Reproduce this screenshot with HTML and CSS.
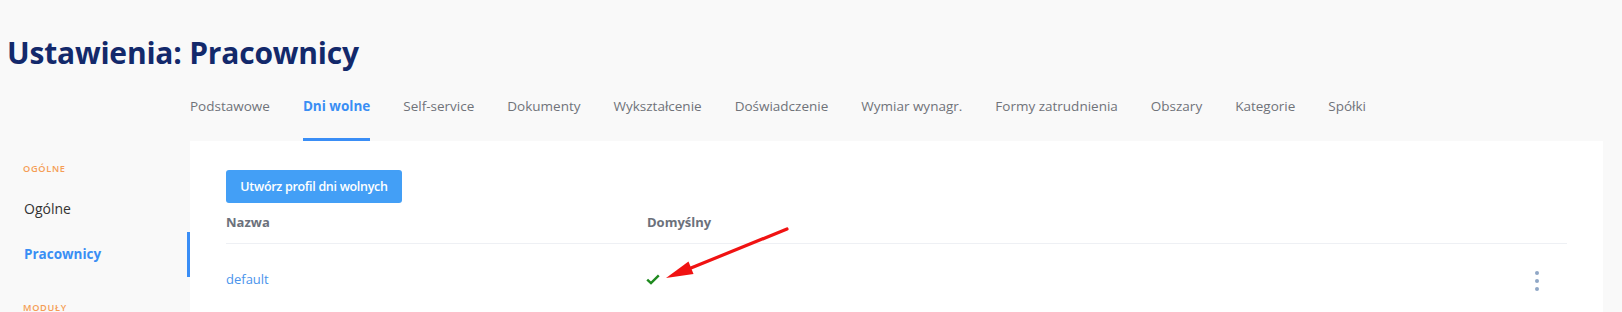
FILE: index.html
```html
<!DOCTYPE html>
<html lang="pl">
<head>
<meta charset="utf-8">
<title>Ustawienia: Pracownicy</title>
<link rel="stylesheet" href="styles.css">
</head>
<body>
<h1 class="page-title">Ustawienia: Pracownicy</h1>
<div class="layout">
  <nav class="tabs">
    <a class="tab">Podstawowe</a>
    <a class="tab tab-active">Dni wolne</a>
    <a class="tab">Self-service</a>
    <a class="tab">Dokumenty</a>
    <a class="tab">Wykształcenie</a>
    <a class="tab">Doświadczenie</a>
    <a class="tab">Wymiar wynagr.</a>
    <a class="tab">Formy zatrudnienia</a>
    <a class="tab">Obszary</a>
    <a class="tab">Kategorie</a>
    <a class="tab">Spółki</a>
  </nav>
  <aside class="sidebar">
    <div class="side-label">OGÓLNE</div>
    <a class="side-item">Ogólne</a>
    <a class="side-item side-active">Pracownicy</a>
    <div class="side-label side-label-next">MODUŁY</div>
  </aside>
  <main class="panel">
    <button class="btn-primary">Utwórz profil dni wolnych</button>
    <div class="table">
      <div class="row row-head">
        <div class="cell cell-name">Nazwa</div>
        <div class="cell cell-default">Domyślny</div>
        <div class="cell cell-actions"></div>
      </div>
      <div class="row">
        <div class="cell cell-name"><a class="link">default</a></div>
        <div class="cell cell-default">
          <svg class="check" width="14" height="11" viewBox="0 0 14 11"><path d="M1.2 5.6 L5 9.2 L12.8 1.4" fill="none" stroke="#1f8a1f" stroke-width="2.4"/></svg>
        </div>
        <div class="cell cell-actions">
          <span class="kebab"><i></i><i></i><i></i></span>
        </div>
      </div>
    </div>
  </main>
</div>
<svg class="annotation" width="1622" height="312" viewBox="0 0 1622 312">
  <line x1="787" y1="229" x2="686" y2="270" stroke="#f01212" stroke-width="3.2" stroke-linecap="round"/>
  <polygon points="666,278 688.5,261.5 693.5,274" fill="#f01212"/>
</svg>
</body>
</html>
```

FILE: styles.css
```css
* { box-sizing: border-box; }

html, body {
  margin: 0;
  padding: 0;
}

body {
  background: #f9f9f9;
  font-family: "Open Sans", "Noto Sans", sans-serif;
  color: #333;
  width: 1622px;
  height: 312px;
  overflow: hidden;
  position: relative;
}

.page-title {
  margin: 0;
  padding: 33px 0 12px 7px;
  font-size: 30px;
  line-height: 40px;
  font-weight: 700;
  color: #13296b;
  letter-spacing: -0.2px;
}

.layout {
  display: grid;
  grid-template-columns: 190px 1fr;
  grid-template-rows: auto 1fr;
  padding-right: 19px;
}

.tabs {
  grid-column: 2;
  grid-row: 1;
  display: flex;
  gap: 33px;
}

.tab {
  display: block;
  padding: 11px 0 22px;
  font-size: 13.5px;
  line-height: 20px;
  color: #707379;
  border-bottom: 3px solid transparent;
  white-space: nowrap;
}

.tab-active {
  color: #3a8ef4;
  font-weight: 700;
  border-bottom-color: #3a8ef6;
}

.sidebar {
  grid-column: 1;
  grid-row: 2;
  padding-top: 21px;
}

.side-label {
  padding-left: 23px;
  font-size: 9.2px;
  line-height: 14px;
  font-weight: 600;
  letter-spacing: 0.7px;
  color: #f59d55;
  margin-bottom: 10px;
}

.side-label-next {
  margin-top: 24px;
}

.side-item {
  display: block;
  padding-left: 24px;
  font-size: 14px;
  line-height: 46px;
  color: #333;
  border-right: 3px solid transparent;
}

.side-active {
  color: #3a8ef4;
  font-weight: 700;
  font-size: 13.5px;
  border-right-color: #3a8ef6;
  line-height: 45px;
}

.panel {
  grid-column: 2;
  grid-row: 2;
  background: #fff;
  padding: 29px 36px 0;
  min-height: 171px;
}

.btn-primary {
  display: block;
  width: 176px;
  height: 33px;
  border: 0;
  border-radius: 3px;
  background: #439ff6;
  color: #fff;
  font-family: "Open Sans", "Noto Sans", sans-serif;
  font-size: 12.5px;
  letter-spacing: -0.3px;
  font-weight: 600;
  padding: 0;
  line-height: 33px;
}

.table {
  display: flex;
  flex-direction: column;
}

.row {
  display: flex;
  align-items: center;
  height: 70px;
}

.row-head {
  height: 41px;
  border-bottom: 1px solid #eef0f4;
  align-items: flex-start;
  padding-top: 10px;
}

.row-head .cell {
  font-size: 13px;
  line-height: 18px;
  font-weight: 700;
  color: #6c717b;
}

.row:not(.row-head) {
  align-items: flex-start;
  padding-top: 26px;
}

.cell {
  font-size: 13px;
  line-height: 18px;
}

.cell-name {
  width: 421px;
}

.cell-default {
  flex: 1;
}

.cell-actions {
  width: 60px;
  display: flex;
  justify-content: center;
}

.link {
  color: #4a94ec;
}

.check {
  display: block;
  margin-top: 4px;
  margin-left: -1px;
}

.kebab {
  display: flex;
  flex-direction: column;
  gap: 3.6px;
  margin-top: 1px;
}

.kebab i {
  display: block;
  width: 4.2px;
  height: 4.2px;
  border-radius: 50%;
  background: #8fa7c6;
}

.annotation {
  position: absolute;
  left: 0;
  top: 0;
  pointer-events: none;
}
```
